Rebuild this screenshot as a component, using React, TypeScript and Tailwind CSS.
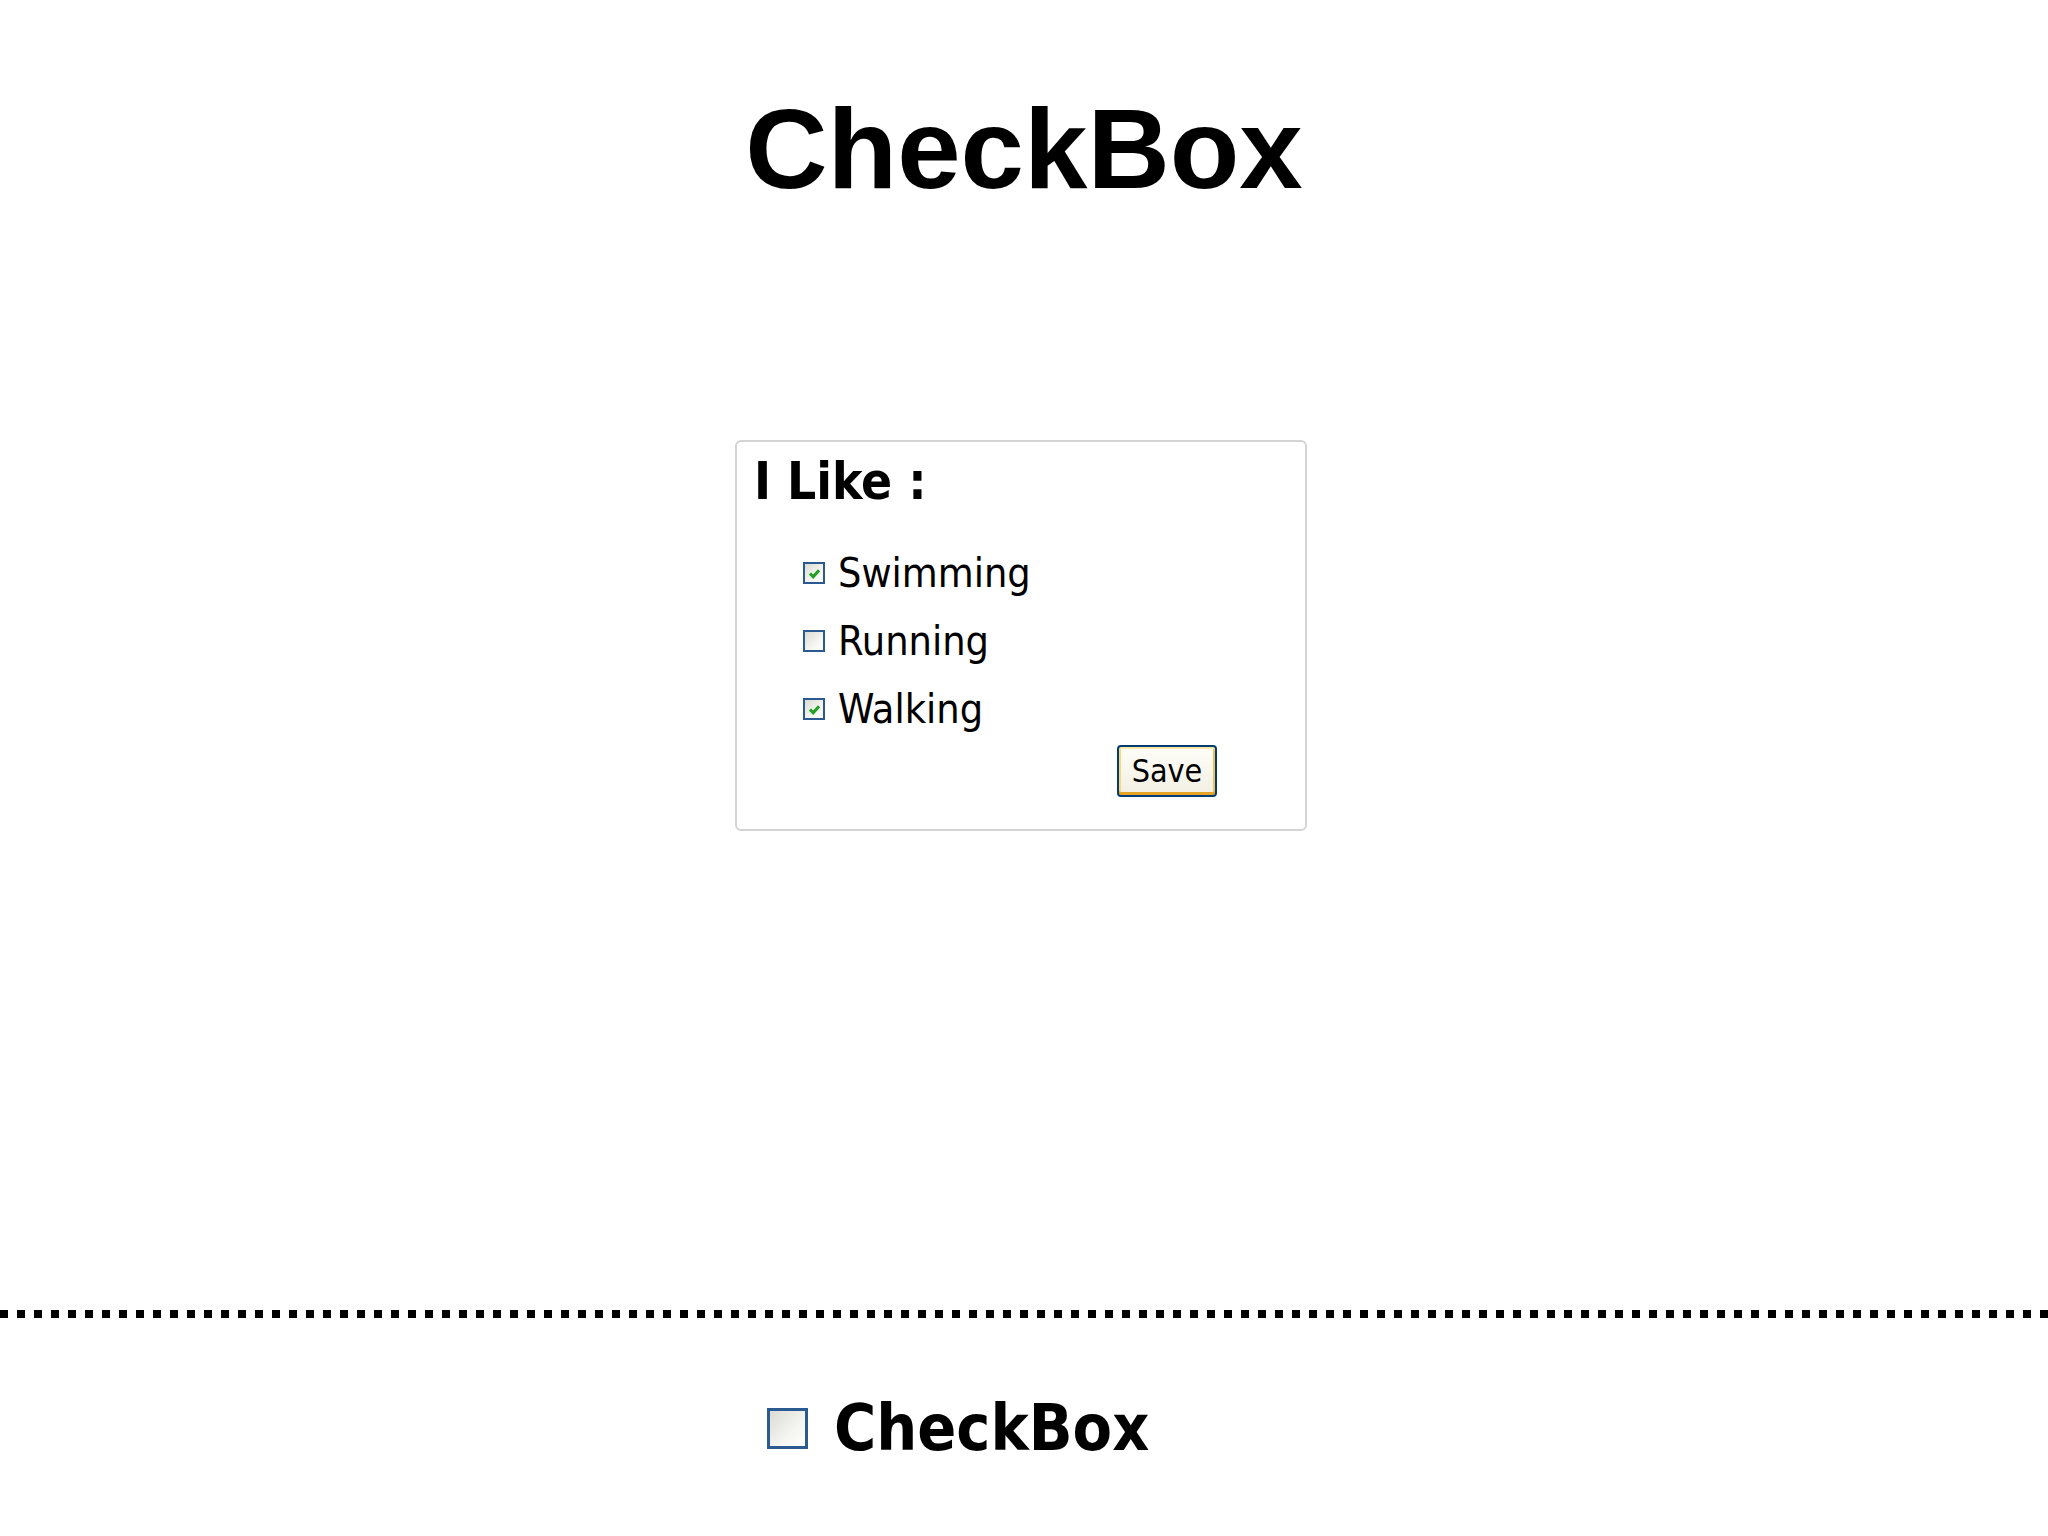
import React from "react";

type BoxProps = { checked?: boolean; size: "sm" | "lg" };

// Classic XP-style checkbox
function XpCheck({ checked, size }: BoxProps) {
  const box =
    size === "sm"
      ? "w-[22px] h-[22px] border-[2px]"
      : "w-[41px] h-[41px] border-[3px]";
  return (
    <span
      className={`${box} inline-flex items-center justify-center shrink-0 border-[#2a5a8f] bg-[linear-gradient(135deg,#dcdcd6_0%,#f4f4f0_60%,#ffffff_100%)]`}
    >
      {checked && (
        <svg viewBox="0 0 10 10" className="w-[13px] h-[13px]">
          <path d="M1.5 5 L4 7.5 L8.5 2.5" fill="none" stroke="#21a121" strokeWidth="2.4" />
        </svg>
      )}
    </span>
  );
}

const hobbies = [
  { label: "Swimming", checked: true },
  { label: "Running", checked: false },
  { label: "Walking", checked: true },
];

export default function App() {
  return (
    <div className="w-[2048px] h-[1536px] bg-white text-black flex flex-col items-center overflow-hidden">
      <h1 className="mt-[84px] text-[114px] leading-[130px] font-bold font-['Liberation_Sans',Arial,sans-serif]">
        CheckBox
      </h1>

      <div className="mt-[226px] mr-[6px] w-[572px] h-[391px] border-2 border-[#d4d4d4] rounded-[6px] flex flex-col pl-[17px] pt-[12px] font-['DejaVu_Sans_Condensed','DejaVu_Sans',sans-serif]">
        <h2 className="text-[51px] leading-[56px] font-bold">I Like :</h2>

        <div className="mt-[42px] ml-[49px] flex flex-col gap-[26px]">
          {hobbies.map((h) => (
            <label key={h.label} className="flex items-center gap-[13px] h-[42px]">
              <XpCheck checked={h.checked} size="sm" />
              <span className="text-[41px] leading-[42px]">{h.label}</span>
            </label>
          ))}
        </div>

        <div className="mt-[15px] flex justify-end pr-[88px]">
          <button className="w-[100px] h-[52px] rounded-[4px] border-2 border-[#003c74] bg-[linear-gradient(#fffef8,#f1efe2)] shadow-[inset_0_2px_0_#fde8a8,inset_0_-3px_0_#e6a325,inset_2px_0_0_#f9d77a,inset_-2px_0_0_#f3c255] text-[32px] leading-none">
            Save
          </button>
        </div>
      </div>

      <div className="mt-[479px] w-full h-[8px] bg-[repeating-linear-gradient(to_right,#000_0px,#000_8px,transparent_8px,transparent_17px)]" />

      <div className="mt-[75px] self-start ml-[767px] flex items-center gap-[26px] font-['DejaVu_Sans_Condensed','DejaVu_Sans',sans-serif]">
        <XpCheck size="lg" />
        <span className="text-[64px] leading-[70px] font-bold">CheckBox</span>
      </div>
    </div>
  );
}
